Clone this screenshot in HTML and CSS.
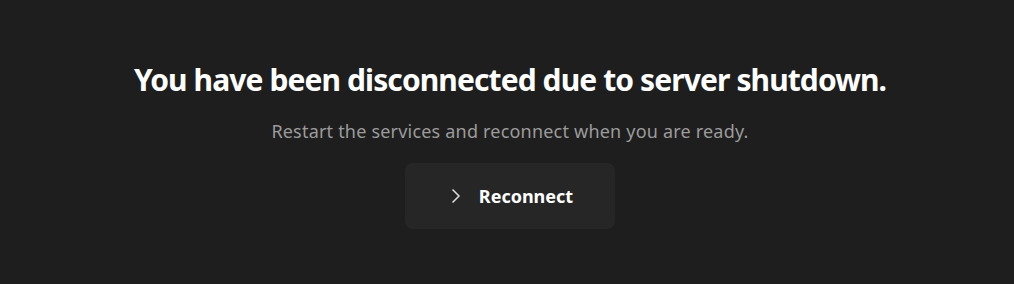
FILE: index.html
```html
<!DOCTYPE html>
<html>
<head>
<meta charset="utf-8">
<link rel="stylesheet" href="styles.css">
</head>
<body>
<main class="screen">
  <h1 class="title">You have been disconnected due to server shutdown.</h1>
  <p class="subtitle">Restart the services and reconnect when you are ready.</p>
  <button class="btn">
    <svg class="chev" width="10" height="16" viewBox="0 0 10 16"><path d="M1.5 1.5 L8 8 L1.5 14.5" fill="none" stroke="#dcdcdc" stroke-width="1.5"/></svg>
    <span>Reconnect</span>
  </button>
</main>
</body>
</html>
```
FILE: styles.css
```css
html, body {
  margin: 0;
  background: #1e1e1e;
  height: 100%;
}
.screen {
  display: flex;
  flex-direction: column;
  align-items: center;
  padding: 60px 0 0 6px;
  font-family: "Noto Sans", sans-serif;
}
.title {
  margin: 0;
  color: #ffffff;
  font-size: 30px;
  font-weight: 700;
  letter-spacing: -0.9px;
  line-height: 40px;
}
.subtitle {
  margin: 19px 0 0;
  color: #9b9b9b;
  font-size: 18px;
  line-height: 24px;
  letter-spacing: 0.2px;
}
.btn {
  margin-top: 20px;
  width: 210px;
  height: 66px;
  background: #262626;
  border: none;
  border-radius: 8px;
  display: flex;
  align-items: center;
  justify-content: center;
  gap: 18px;
  color: #ffffff;
  font-family: "Noto Sans", sans-serif;
  font-size: 18px;
  font-weight: 700;
  letter-spacing: 0px;
  padding: 0 0 0 4px;
}
.chev { display: block; }
```
